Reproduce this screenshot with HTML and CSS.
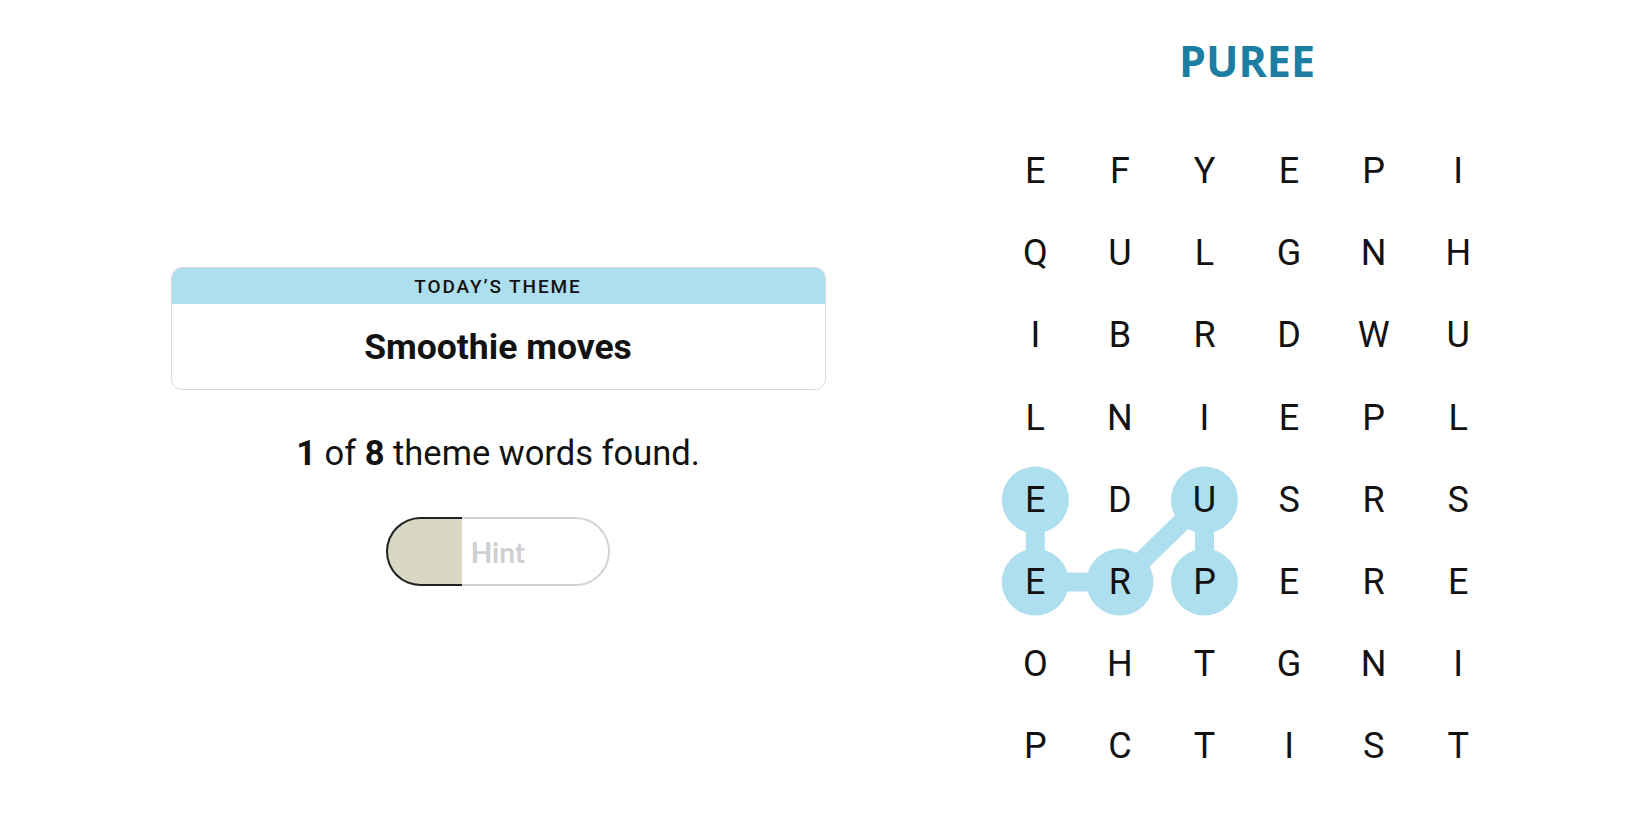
FILE: index.html
```html
<!DOCTYPE html>
<html lang="en">
<head>
<meta charset="utf-8">
<title>Strands</title>
<link rel="stylesheet" href="styles.css">
</head>
<body>
<main class="page">
  <section class="left">
    <div class="theme-card">
      <div class="theme-head">Today’s Theme</div>
      <div class="theme-body">Smoothie moves</div>
    </div>
    <p class="found"><b>1</b> of <b>8</b> theme words found.</p>
    <button class="hint">
      <span class="hint-progress"></span>
      <span class="hint-label">Hint</span>
    </button>
  </section>
  <section class="right">
    <h1 class="word">PUREE</h1>
    <div class="board">
      <svg class="path" width="508" height="658" viewBox="0 0 508 658" aria-hidden="true">
        <g stroke="#aedfee" stroke-width="19" stroke-linecap="round">
          <line x1="211.5" y1="452.1" x2="211.5" y2="369.9"/>
          <line x1="211.5" y1="369.9" x2="126.9" y2="452.1"/>
          <line x1="126.9" y1="452.1" x2="42.3" y2="452.1"/>
          <line x1="42.3" y1="452.1" x2="42.3" y2="369.9"/>
        </g>
        <g fill="#aedfee">
          <circle cx="42.3" cy="369.9" r="33.5"/>
          <circle cx="42.3" cy="452.1" r="33.5"/>
          <circle cx="126.9" cy="452.1" r="33.5"/>
          <circle cx="211.5" cy="369.9" r="33.5"/>
          <circle cx="211.5" cy="452.1" r="33.5"/>
        </g>
      </svg>
      <div class="grid">
        <span>E</span><span>F</span><span>Y</span><span>E</span><span>P</span><span>I</span>
        <span>Q</span><span>U</span><span>L</span><span>G</span><span>N</span><span>H</span>
        <span>I</span><span>B</span><span>R</span><span>D</span><span>W</span><span>U</span>
        <span>L</span><span>N</span><span>I</span><span>E</span><span>P</span><span>L</span>
        <span>E</span><span>D</span><span>U</span><span>S</span><span>R</span><span>S</span>
        <span>E</span><span>R</span><span>P</span><span>E</span><span>R</span><span>E</span>
        <span>O</span><span>H</span><span>T</span><span>G</span><span>N</span><span>I</span>
        <span>P</span><span>C</span><span>T</span><span>I</span><span>S</span><span>T</span>
      </div>
    </div>
  </section>
</main>
</body>
</html>
```
FILE: styles.css
```css
* { box-sizing: border-box; }
html, body { margin: 0; padding: 0; background: #fff; }
body {
  width: 1650px;
  height: 825px;
  overflow: hidden;
  font-family: Roboto, "Liberation Sans", Arial, sans-serif;
  color: #121212;
}
.page {
  display: flex;
  height: 825px;
}
.left {
  width: 996px;
  flex: none;
  display: flex;
  flex-direction: column;
  align-items: center;
  padding-top: 267px;
}
.theme-card {
  width: 655px;
  border: 1.5px solid #d9d9d9;
  border-radius: 11px;
  overflow: hidden;
}
.theme-head {
  height: 36px;
  background: #aedfee;
  text-align: center;
  font-size: 19px;
  font-weight: 500;
  line-height: 37px;
  letter-spacing: 1.9px;
  text-transform: uppercase;
  color: #121212;
}
.theme-body {
  height: 85px;
  display: flex;
  align-items: center;
  justify-content: center;
  font-weight: 700;
  font-size: 35.5px;
  color: #121212;
}
.found {
  margin: 43px 0 0;
  font-size: 34.5px;
  line-height: 40px;
  color: #121212;
}
.found b { font-weight: 700; }
.hint {
  position: relative;
  margin-top: 44px;
  width: 224px;
  height: 69px;
  border: 2px solid #d3d3d3;
  border-radius: 35px;
  background: #fff;
  padding: 0;
  overflow: visible;
  font-family: Lato, "Liberation Sans", sans-serif;
}
.hint-progress {
  position: absolute;
  left: -2px;
  top: -2px;
  bottom: -2px;
  width: 76px;
  background: #d8d8c5;
  border: 2px solid #222;
  border-right: none;
  border-radius: 35px 0 0 35px;
}
.hint-label {
  position: relative;
  font-size: 28px;
  font-weight: 700;
  color: #cfcfcf;
}
.right {
  width: 502px;
  flex: none;
  display: flex;
  flex-direction: column;
  align-items: center;
  padding-top: 36px;
}
.word {
  margin: 0;
  font-family: "Open Sans", "Liberation Sans", sans-serif;
  font-weight: 700;
  font-size: 43px;
  line-height: 50px;
  color: #1e7da2;
}
.board {
  position: relative;
  flex: none;
  margin-top: 44px;
  width: 508px;
  height: 658px;
}
.path {
  position: absolute;
  left: 0;
  top: 0;
}
.grid {
  position: relative;
  display: grid;
  grid-template-columns: repeat(6, 84.6px);
  grid-template-rows: repeat(8, 82.2px);
}
.grid span {
  display: flex;
  align-items: center;
  justify-content: center;
  font-size: 36px;
  color: #121212;
}
```
